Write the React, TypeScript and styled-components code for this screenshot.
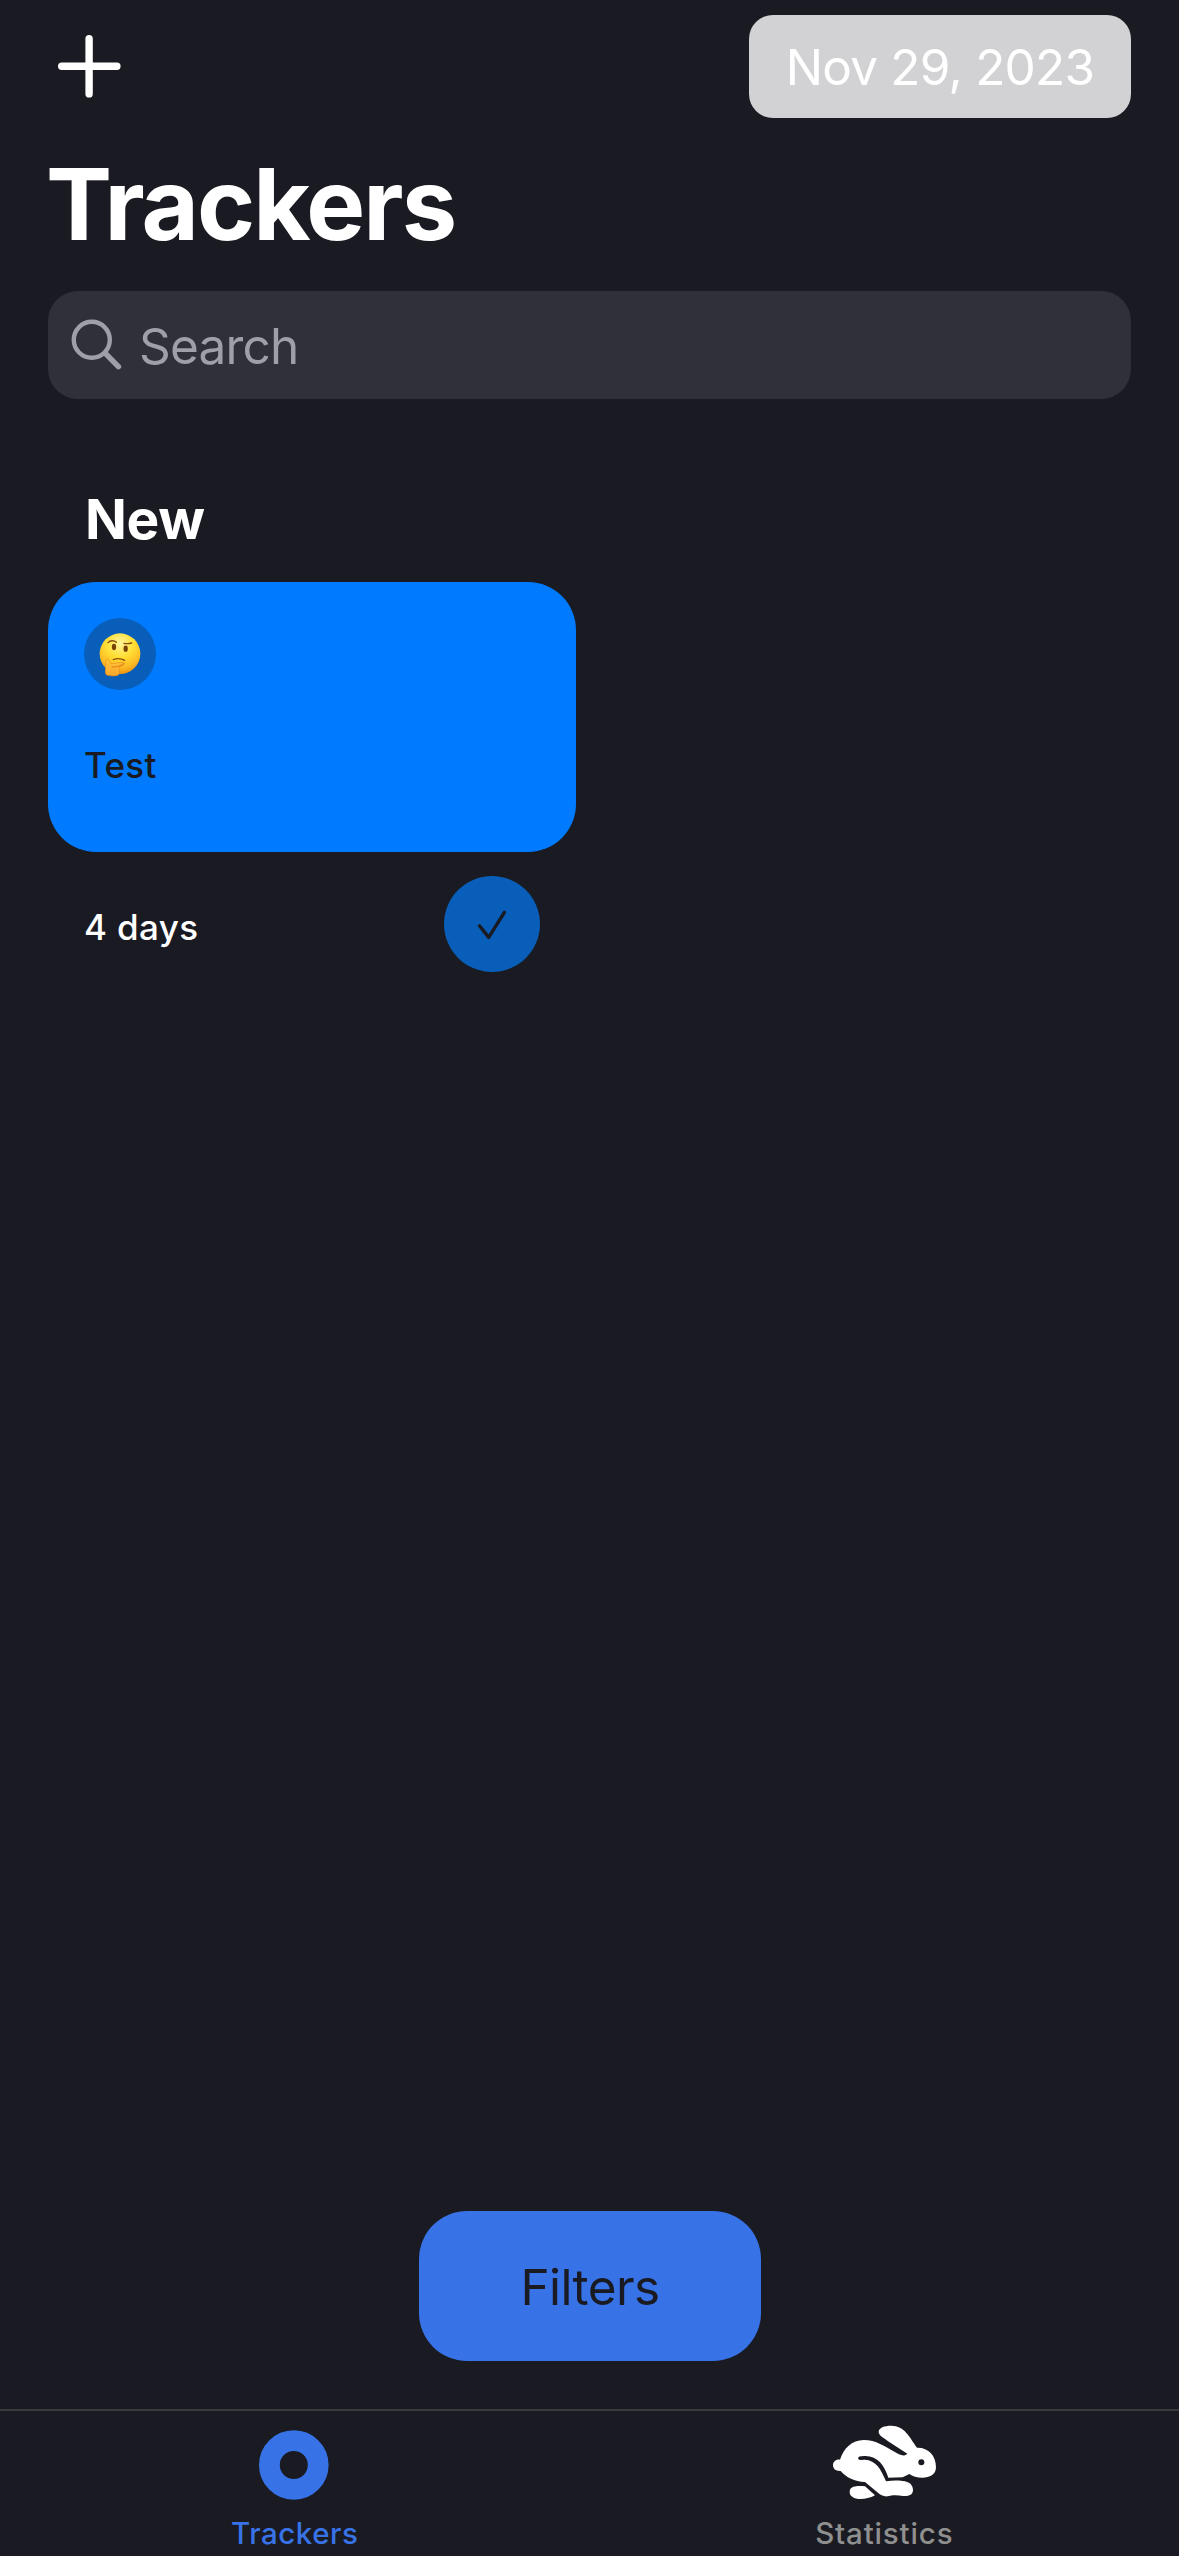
import React from 'react';
import styled, { createGlobalStyle } from 'styled-components';

const colors = {
  background: '#1a1b22',
  field: '#30303a',
  placeholder: '#9f9fa9',
  card: '#007bff',
  cardDim: '#085eb9',
  accent: '#3772e7',
  date: '#d2d2d4',
  muted: '#8f8f8f',
  divider: '#3b3b3c',
};

const GlobalStyle = createGlobalStyle`
  * { box-sizing: border-box; }
  body {
    margin: 0;
    background: ${colors.background};
    font-family: Inter, "Liberation Sans", sans-serif;
  }
  svg { display: block; }
  button {
    border: 0;
    padding: 0;
    background: none;
    font-family: inherit;
    color: inherit;
  }
`;

const Screen = styled.div`
  display: flex;
  flex-direction: column;
  width: 1179px;
  height: 2556px;
  background: ${colors.background};
  color: #fff;
`;

const Header = styled.header`
  display: flex;
  flex-direction: column;
  padding: 15px 48px 0;
`;

const Toolbar = styled.div`
  display: flex;
  justify-content: space-between;
  align-items: center;
  height: 103px;
`;

const AddButton = styled.button`
  padding-left: 8px;
`;

const DateButton = styled.button`
  display: flex;
  align-items: center;
  justify-content: center;
  width: 382px;
  height: 103px;
  border-radius: 24px;
  background: ${colors.date};
`;

const Label = styled.span<{ $size: number; $weight?: number; $spacing?: number }>`
  font-size: ${(p) => p.$size}px;
  font-weight: ${(p) => p.$weight ?? 400};
  letter-spacing: ${(p) => p.$spacing ?? 0}px;
  line-height: 54px;
  white-space: nowrap;
`;

const Title = styled.h1`
  margin: 35px 0 36px -2px;
  font-size: 99px;
  font-weight: 700;
  line-height: 102px;
  letter-spacing: -2px;
`;

const SearchField = styled.div`
  display: flex;
  align-items: center;
  gap: 14px;
  height: 108px;
  padding: 2px 23px 0;
  border-radius: 30px;
  background: ${colors.field};
  color: ${colors.placeholder};
`;

const Content = styled.main`
  flex: 1;
  padding: 90px 48px 0;
`;

const SectionTitle = styled.h2`
  margin: 0 0 33px;
  padding-left: 37px;
  font-size: 55px;
  font-weight: 700;
  line-height: 60px;
  letter-spacing: -0.3px;
`;

const Grid = styled.div`
  display: grid;
  grid-template-columns: 528px 528px;
  justify-content: space-between;
`;

const Card = styled.div`
  display: flex;
  flex-direction: column;
  align-items: flex-start;
  gap: 48px;
  height: 270px;
  padding: 36px;
  border-radius: 48px;
  background: ${colors.card};
  color: ${colors.background};
`;

const Round = styled.div<{ $size: number }>`
  display: flex;
  align-items: center;
  justify-content: center;
  width: ${(p) => p.$size}px;
  height: ${(p) => p.$size}px;
  border-radius: 50%;
  background: ${colors.cardDim};
`;

const CardFooter = styled.div`
  display: flex;
  align-items: center;
  justify-content: space-between;
  padding: 24px 36px;
`;

const Days = styled.div`
  display: flex;
  padding-top: 6px;
`;

const FiltersButton = styled.button`
  display: flex;
  align-items: center;
  justify-content: center;
  align-self: center;
  width: 342px;
  height: 150px;
  margin: 0 0 48px 1px;
  padding-top: 2px;
  border-radius: 48px;
  background: ${colors.accent};
  color: ${colors.background};
`;

const TabBar = styled.nav`
  display: grid;
  grid-template-columns: 1fr 1fr;
  height: 147px;
  border-top: 2px solid ${colors.divider};
`;

const Tab = styled.div<{ $active?: boolean }>`
  display: flex;
  flex-direction: column;
  align-items: center;
  color: ${(p) => (p.$active ? colors.accent : colors.muted)};
`;

const TabIcon = styled.div<{ $top: number }>`
  display: flex;
  align-items: center;
  height: 95px;
  padding-top: ${(p) => p.$top}px;
`;

const PlusIcon = () => (
  <svg width="67" height="67" viewBox="0 0 67 67" fill="none" stroke="#fff" strokeWidth="7.4" strokeLinecap="round">
    <path d="M33.1 5.7v55.2M5.7 33.3h55.2" />
  </svg>
);

const SearchIcon = () => (
  <svg width="54" height="54" viewBox="0 0 54 54" fill="none" stroke="currentColor" strokeLinecap="round">
    <circle cx="20.8" cy="20.8" r="18" strokeWidth="4.4" />
    <path d="M34.6 34.6L47.4 47.6" strokeWidth="5.6" />
  </svg>
);

const CheckIcon = () => (
  <svg width="96" height="96" viewBox="0 0 96 96" fill="none" stroke={colors.background} strokeWidth="3.4" strokeLinecap="round" strokeLinejoin="round">
    <path d="M35.5 49.8L44.7 61.4L60.4 36.4" />
  </svg>
);

const ThinkingFace = () => (
  <svg width="72" height="72" viewBox="0 0 216 216">
    <defs>
      <radialGradient id="face" cx="0.5" cy="0.25" r="0.75">
        <stop offset="0" stopColor="#fff59a" />
        <stop offset="0.45" stopColor="#ffdf35" />
        <stop offset="0.8" stopColor="#fdb924" />
        <stop offset="1" stopColor="#ef9312" />
      </radialGradient>
      <linearGradient id="hand" x1="0" y1="0" x2="0" y2="1">
        <stop offset="0" stopColor="#ffc93d" />
        <stop offset="1" stopColor="#fba52a" />
      </linearGradient>
    </defs>
    <circle cx="108" cy="107" r="61" fill="url(#face)" />
    <ellipse cx="90" cy="87" rx="6.5" ry="9.5" fill="#7a4306" />
    <ellipse cx="125" cy="92" rx="6.5" ry="9.5" fill="#7a4306" />
    <g fill="none" stroke="#8a4d08" strokeLinecap="round">
      <path d="M72 74C78 67 90 66 97 73" strokeWidth="4" />
      <path d="M120 76C128 78 136 77 143 75" strokeWidth="4" />
      <path d="M88 125C98 121 112 122 122 127" strokeWidth="4" />
    </g>
    <path
      d="M70 122C76 122 76 136 81 137C96 137 109 131 120 134C126 138 117 144 105 147C108 152 108 157 105 161C109 166 104 170 102 171C97 175 76 174 68 171C61 166 66 151 65 142C65 133 64 123 70 122Z"
      fill="url(#hand)"
      stroke="#e98b17"
      strokeWidth="2"
    />
    <path d="M84 147C94 148 108 145 119 137" fill="none" stroke="#dc7d12" strokeWidth="3" strokeLinecap="round" />
  </svg>
);

const DonutIcon = () => (
  <svg width="71" height="70" viewBox="0 0 71 70" fill="none">
    <circle cx="34.8" cy="35" r="24.4" stroke="currentColor" strokeWidth="20.8" />
  </svg>
);

const HareIcon = () => (
  <svg width="128" height="95" viewBox="0 0 384 285">
    <g fill="#fff">
      <path d="M60 134C70 101 96 75 131 75C169 75 193 94 226 112C240 120 252 126 262 116L202 77C190 68 176 61 176 51C176 38 193 32 214 32C254 32 269 67 291 98C325 97 348 121 348 157C348 179 329 188 307 188C291 188 277 184 268 177L248 187L205 188C193 151 173 122 134 123L123 124C112 124 112 135 121 135L134 134C168 135 184 164 198 199C216 196 234 196 247 198C269 199 279 211 279 225C279 240 266 244 249 243C229 239 214 241 202 244C191 245 181 240 172 232L135 201C104 200 78 187 62 168C48 169 39 162 39 151C39 140 48 132 60 134Z" />
      <path d="M89 231C89 217 101 211 135 214L165 241C151 249 136 252 122 252C101 252 89 244 89 231Z" />
    </g>
    <circle cx="304" cy="142" r="9" fill={colors.background} />
  </svg>
);

export default function App() {
  return (
    <Screen>
      <GlobalStyle />
      <Header>
        <Toolbar>
          <AddButton aria-label="Add">
            <PlusIcon />
          </AddButton>
          <DateButton>
            <Label $size={49.5} $spacing={-0.75}>Nov 29, 2023</Label>
          </DateButton>
        </Toolbar>
        <Title>Trackers</Title>
        <SearchField>
          <SearchIcon />
          <Label $size={49.5} $spacing={-0.8}>Search</Label>
        </SearchField>
      </Header>
      <Content>
        <SectionTitle>New</SectionTitle>
        <Grid>
          <section>
            <Card>
              <Round $size={72}>
                <ThinkingFace />
              </Round>
              <Label $size={35} $weight={500} $spacing={0.35}>Test</Label>
            </Card>
            <CardFooter>
              <Days>
                <Label $size={35} $weight={500} $spacing={0.35}>4 days</Label>
              </Days>
              <Round $size={96}>
                <CheckIcon />
              </Round>
            </CardFooter>
          </section>
        </Grid>
      </Content>
      <FiltersButton>
        <Label $size={49.5} $spacing={-0.6}>Filters</Label>
      </FiltersButton>
      <TabBar>
        <Tab $active>
          <TabIcon $top={12}>
            <DonutIcon />
          </TabIcon>
          <Label $size={29.5} $weight={500} $spacing={0.55}>Trackers</Label>
        </Tab>
        <Tab>
          <TabIcon $top={8}>
            <HareIcon />
          </TabIcon>
          <Label $size={29.5} $weight={500} $spacing={0.85}>Statistics</Label>
        </Tab>
      </TabBar>
    </Screen>
  );
}
